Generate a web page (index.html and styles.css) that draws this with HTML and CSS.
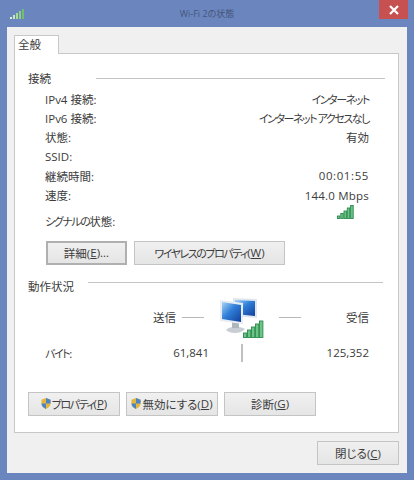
FILE: index.html
```html
<!DOCTYPE html>
<html lang="ja">
<head>
    <meta charset="UTF-8">
    <meta name="viewport" content="width=device-width, initial-scale=1.0">
    <title>Wi-Fi 2の状態</title>
    <link rel="stylesheet" href="styles.css">
</head>
<body>
    <div class="window">
        <div class="titlebar">
            <svg class="title-icon" width="14" height="10" viewBox="0 0 14 10">
                <rect x="0" y="8" width="2" height="2" fill="#dff0d0"/>
                <rect x="3" y="6" width="2" height="4" fill="#c8e8b0"/>
                <rect x="6" y="4" width="2" height="6" fill="#a8dc90"/>
                <rect x="9" y="2" width="2" height="8" fill="#8ed080"/>
                <rect x="12" y="0" width="2" height="10" fill="#6fbf70"/>
            </svg>
            <div class="title">Wi-Fi 2の状態</div>
            <div class="close-x">
                <svg width="10" height="10" viewBox="0 0 10 10"><path d="M1 1L9 9M9 1L1 9" stroke="#fff" stroke-width="2.2"/></svg>
            </div>
        </div>
        <div class="client">
            <div class="tabs"><div class="tab">全般</div></div>
            <div class="panel">
                <div class="section-head head-conn"><span>接続</span><i class="rule"></i></div>
                <div class="rows">
                    <div class="row"><label>IPv4 接続:</label><p class="kana">インターネット</p></div>
                    <div class="row"><label>IPv6 接続:</label><p class="kana">インターネット アクセスなし</p></div>
                    <div class="row"><label>状態:</label><p>有効</p></div>
                    <div class="row"><label>SSID:</label><p></p></div>
                    <div class="row"><label>継続時間:</label><p class="num">00:01:55</p></div>
                    <div class="row"><label>速度:</label><p class="speed">144.0 Mbps</p></div>
                    <div class="row row-signal">
                        <label><span class="kana">シグナルの</span>状態:</label>
                        <svg class="signal" width="17" height="14" viewBox="0 0 17 14">
                            <g fill="#6cc487" stroke="#2a8a4c" stroke-width="0.9">
                                <rect x="0.5" y="11" width="2.4" height="2.5"/>
                                <rect x="3.8" y="8.5" width="2.4" height="5"/>
                                <rect x="7" y="6" width="2.4" height="7.5"/>
                                <rect x="10.3" y="3" width="2.4" height="10.5"/>
                                <rect x="13.6" y="0.5" width="2.6" height="13"/>
                            </g>
                        </svg>
                    </div>
                </div>
                <div class="btn-row top-btns">
                    <button class="btn btn-default">詳細(<u>E</u>)...</button>
                    <button class="btn btn-wide"><span class="kana">ワイヤレスのプロパティ</span>(<u>W</u>)</button>
                </div>
                <div class="section-head head-act"><span>動作状況</span><i class="rule"></i></div>
                <div class="activity">
                    <span class="act-label">送信</span>
                    <i class="dash"></i>
                    <svg class="net-icon" width="44" height="41" viewBox="0 0 44 41">
                        <defs>
                            <linearGradient id="screen" x1="0" y1="0" x2="1" y2="1">
                                <stop offset="0" stop-color="#a8d4f6"/>
                                <stop offset="0.45" stop-color="#2f7fd8"/>
                                <stop offset="1" stop-color="#123f9c"/>
                            </linearGradient>
                        </defs>
                        <path d="M13 1L37 2V21L13 19Z" fill="#dfe6ee"/>
                        <path d="M15 3L35 4V19L15 17Z" fill="url(#screen)"/>
                        <path d="M6 33C10 29 19 29 25 32C21 37 10 37 6 33Z" fill="#c9ced4"/>
                        <rect x="12" y="25" width="7" height="6" fill="#aeb6be"/>
                        <path d="M0 3L23 6V27L0 24Z" fill="#e8edf3"/>
                        <path d="M2 5L21 8V25L2 22Z" fill="url(#screen)"/>
                        <g fill="#6cc487" stroke="#2a8a4c" stroke-width="0.9">
                            <rect x="23.5" y="36" width="3.2" height="4.5"/>
                            <rect x="27.5" y="33" width="3.2" height="7.5"/>
                            <rect x="31.5" y="30" width="3.2" height="10.5"/>
                            <rect x="35.5" y="27" width="3.2" height="13.5"/>
                            <rect x="39.5" y="24" width="3.4" height="16.5"/>
                        </g>
                    </svg>
                    <i class="dash dash-right"></i>
                    <span class="act-label act-recv">受信</span>
                </div>
                <div class="bytes">
                    <label><span class="kana">バイト</span>:</label>
                    <span class="sent">61,841</span>
                    <i class="divider"></i>
                    <span class="recv">125,352</span>
                </div>
                <div class="btn-row bottom-btns">
                    <button class="btn btn-third"><svg class="shield" width="10" height="11" viewBox="0 0 11 12"><path d="M5.5 0L10.5 2V6C10.5 9 8 11 5.5 12C3 11 .5 9 .5 6V2Z" fill="#e3b73c"/><path d="M5.5 0L10.5 2V6H5.5ZM5.5 6V12C3 11 .5 9 .5 6Z" fill="#4f84c4"/></svg><span class="kana">プロパティ</span>(<u>P</u>)</button>
                    <button class="btn btn-third"><svg class="shield" width="10" height="11" viewBox="0 0 11 12"><path d="M5.5 0L10.5 2V6C10.5 9 8 11 5.5 12C3 11 .5 9 .5 6V2Z" fill="#e3b73c"/><path d="M5.5 0L10.5 2V6H5.5ZM5.5 6V12C3 11 .5 9 .5 6Z" fill="#4f84c4"/></svg>無効にする(<u>D</u>)</button>
                    <button class="btn btn-third">診断(<u>G</u>)</button>
                </div>
            </div>
            <div class="footer">
                <button class="btn btn-close">閉じる(<u>C</u>)</button>
            </div>
        </div>
    </div>
</body>
</html>
```

FILE: styles.css
```css
html, body {
    margin: 0;
    padding: 0;
}
body {
    width: 414px;
    height: 480px;
    overflow: hidden;
    font-family: "Open Sans", "Noto Sans CJK JP", sans-serif;
    font-size: 11.5px;
    font-feature-settings: "palt";
    color: #3c3c3c;
}
/* katakana in the original UI font is much narrower than kanji */
.kana {
    font-size: 11px;
    letter-spacing: -1.45px;
}
.num {
    letter-spacing: 0.6px;
}
.speed {
    letter-spacing: 0.2px;
}
.window {
    box-sizing: border-box;
    height: 480px;
    background-color: #6b86bf;
    padding: 0 7px 7px 7px;
    display: flex;
    flex-direction: column;
}
.titlebar {
    height: 27px;
    flex: none;
    display: grid;
    grid-template-columns: 1fr auto 1fr;
    align-items: start;
}
.title-icon {
    margin: 9px 0 0 3px;
}
.title {
    font-size: 9px;
    line-height: 16px;
    margin-top: 6px;
    color: #46557a;
}
.close-x {
    justify-self: end;
    width: 29px;
    height: 19px;
    margin-right: -1px;
    background-color: #c75050;
    display: flex;
    align-items: center;
    justify-content: center;
}
.client {
    flex: 1;
    background-color: #f0f0f0;
    padding: 8px 8px 0 7px;
    display: flex;
    flex-direction: column;
}
.tabs {
    display: flex;
    height: 18px;
    flex: none;
}
.tab {
    box-sizing: border-box;
    width: 45px;
    height: 19px;
    background-color: #fff;
    border: 1px solid #c8c8c8;
    border-bottom: none;
    padding-left: 3px;
    line-height: 17px;
    position: relative;
    z-index: 1;
}
.panel {
    box-sizing: border-box;
    height: 380px;
    flex: none;
    background-color: #fff;
    border: 1px solid #c8c8c8;
    padding: 0 13px;
}
.section-head {
    display: flex;
    align-items: center;
    height: 18px;
}
.rule {
    display: block;
    height: 1px;
    background-color: #c4c4c4;
}
.head-conn {
    margin-top: 15px;
}
.head-conn .rule {
    margin-left: 45px;
    width: 289px;
}
.head-act {
    margin-top: 12px;
}
.head-act .rule {
    margin-left: 14px;
    width: 295px;
    position: relative;
    top: -3px;
}
.rows {
    margin: 2px 16px 0 17px;
}
.row {
    display: flex;
    justify-content: space-between;
    align-items: center;
    height: 19.3px;
}
.row p {
    margin: 0;
}
.row-signal {
    height: 29px;
    align-items: flex-start;
}
.row-signal label {
    margin-top: 8px;
}
.signal {
    margin: 0 15px 0 0;
}
.btn-row {
    display: flex;
}
.btn {
    box-sizing: border-box;
    font-family: inherit;
    font-size: 11.5px;
    font-feature-settings: "palt";
    color: #3c3c3c;
    height: 24px;
    padding: 0;
    border: 1px solid #c4c4c4;
    background: linear-gradient(#f0f0f0, #e5e5e5);
    display: inline-flex;
    align-items: center;
    justify-content: center;
    white-space: pre;
}
.top-btns {
    margin: 7px 0 0 18px;
    gap: 7px;
}
.btn-default {
    width: 81px;
    border: 2px solid #b0b0b0;
}
.btn-wide {
    width: 151px;
}
.activity {
    display: flex;
    align-items: center;
    height: 41px;
    margin-top: 2px;
    padding-left: 125px;
}
.act-label {
    flex: none;
    width: 23px;
    white-space: nowrap;
}
.dash {
    display: block;
    flex: none;
    width: 22px;
    height: 1px;
    margin-left: 6px;
    background-color: #b8b8b8;
}
.net-icon {
    flex: none;
    margin-left: 16px;
}
.dash-right {
    margin-left: 15px;
}
.act-recv {
    margin-left: 45px;
}
.bytes {
    display: flex;
    align-items: center;
    height: 18px;
    margin-top: 6px;
    padding-left: 17px;
}
.bytes label {
    width: 127px;
}
.sent {
    width: 37px;
    text-align: right;
}
.divider {
    display: block;
    width: 2px;
    height: 18px;
    margin-left: 32px;
    background-color: #c0c0c0;
}
.recv {
    width: 126px;
    text-align: right;
}
.bottom-btns {
    margin-top: 30px;
    gap: 6px;
}
.btn-third {
    width: 92px;
}
.shield {
    margin-right: 1px;
}
.footer {
    display: flex;
    justify-content: flex-end;
    margin-top: 8px;
}
.btn-close {
    width: 82px;
}
```
